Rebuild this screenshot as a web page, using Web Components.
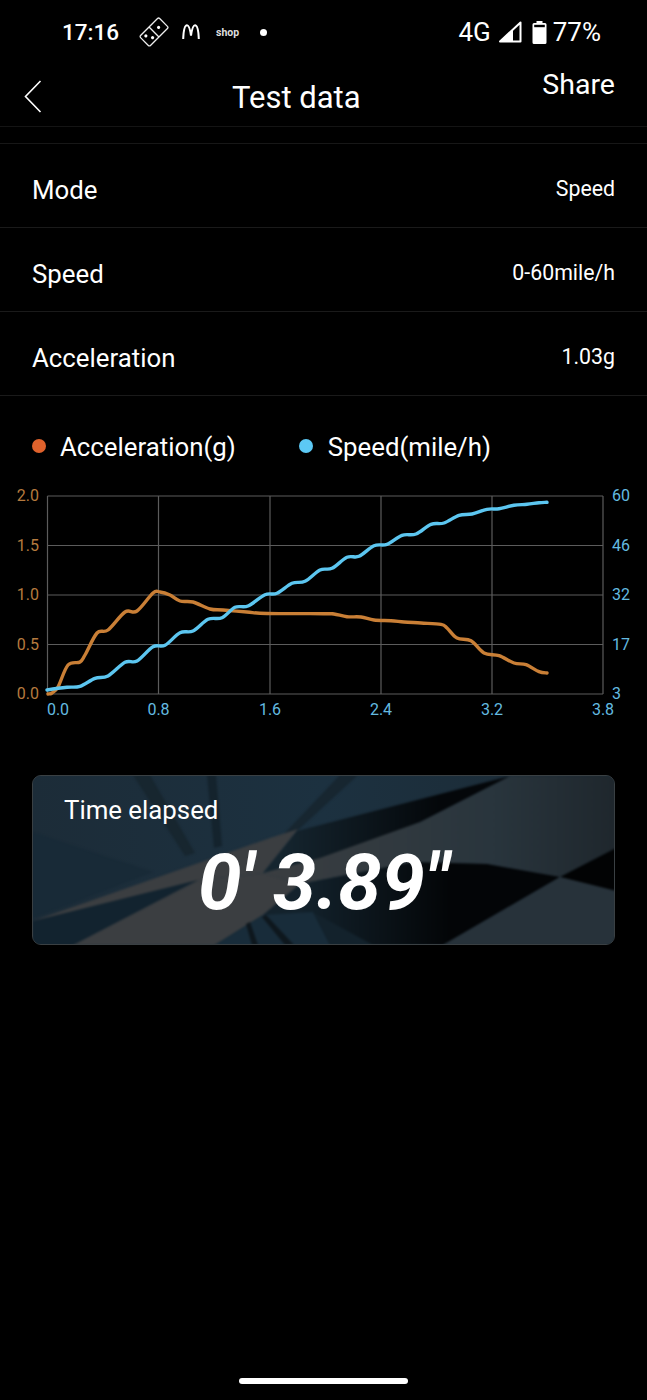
<!DOCTYPE html>
<html>
<head>
<meta charset="utf-8">
<title>Test data</title>
<style>
  html, body { margin: 0; background: #000; }
  body { font-family: Roboto, "Liberation Sans", sans-serif; color: #fff; }
  test-page { width: 647px; height: 1400px; }
</style>
</head>
<body>
<test-page>
  <status-bar></status-bar>
  <app-header title="Test data" action="Share"></app-header>
  <data-row label="Mode" value="Speed"></data-row>
  <data-row label="Speed" value="0-60mile/h"></data-row>
  <data-row label="Acceleration" value="1.03g"></data-row>
  <chart-legend></chart-legend>
  <speed-chart></speed-chart>
  <time-card label="Time elapsed" value="0' 3.89&quot;"></time-card>
  <home-bar></home-bar>
</test-page>

<script>
class TestPage extends HTMLElement {
    constructor() {
        super();
        this.attachShadow({ mode: "open" }).innerHTML = `
        <style>
          :host { display: flex; flex-direction: column; background: #000; overflow: hidden; }
        </style>
        <slot></slot>`;
    }
}

class StatusBar extends HTMLElement {
    constructor() {
        super();
        this.attachShadow({ mode: "open" }).innerHTML = `
        <style>
          :host { display: flex; align-items: center; height: 64px; padding-left: 62px; padding-right: 46px; color: #fff; }
          .time { width: 70px; font-size: 22.5px; font-weight: 500; }
          svg { display: block; flex: none; }
          .shop { font-size: 10.5px; font-weight: 700; color: #ddd; margin-left: 16px; width: 44px; }
          .dot { width: 7px; height: 7px; border-radius: 50%; background: #fff; }
          .right { margin-left: auto; display: flex; align-items: center; font-size: 26px; }
          .right span { display: block; }
        </style>
        <span class="time">17:16</span>
        <svg width="30" height="30" viewBox="0 0 30 30" style="margin-left:7px" fill="none" stroke="#eee" stroke-width="1.3">
          <g transform="rotate(-45 15 15)">
            <rect x="1.5" y="8" width="27" height="14" rx="1.5"/>
            <path d="M15 8v14"/>
            <circle cx="6.5" cy="12" r="1.6" fill="#fff" stroke="none"/>
            <circle cx="10" cy="18" r="1.6" fill="#fff" stroke="none"/>
            <circle cx="21.5" cy="15" r="1.6" fill="#fff" stroke="none"/>
          </g>
        </svg>
        <svg width="18" height="16" viewBox="0 0 18 16" style="margin-left:13px" fill="none" stroke="#fff" stroke-width="2">
          <path d="M1.2 15C1.5 6 3 1.2 5 1.2S8.2 6 9 11.5C9.8 6 11 1.2 13 1.2S16.5 6 16.8 15"/>
        </svg>
        <span class="shop">shop</span>
        <span class="dot"></span>
        <div class="right">
          <span>4G</span>
          <svg width="24" height="22" viewBox="0 0 24 22" style="margin-left:7px">
            <path d="M22.5 1.5v19H2Z" fill="none" stroke="#fff" stroke-width="2" stroke-linejoin="round"/>
            <path d="M15 8.5V21H1.5Z" fill="#fff"/>
          </svg>
          <svg width="15" height="23" viewBox="0 0 15 23" style="margin-left:10px">
            <path d="M4.5 0h6v2h2.5a1.5 1.5 0 0 1 1.5 1.5V21.5a1.5 1.5 0 0 1-1.5 1.5H2a1.5 1.5 0 0 1-1.5-1.5V3.5A1.5 1.5 0 0 1 2 2h2.5Z" fill="#fff"/>
            <rect x="2.2" y="3.8" width="10.6" height="2.4" fill="#000"/>
          </svg>
          <span style="margin-left:6px">77%</span>
        </div>`;
    }
}

class AppHeader extends HTMLElement {
    constructor() {
        super();
        this.attachShadow({ mode: "open" }).innerHTML = `
        <style>
          :host { display: block; height: 80px; box-sizing: border-box; border-bottom: 1px solid #171717; }
          .wrap { display: grid; grid-template-columns: 210px 1fr auto; height: 63px; padding-right: 32px; box-sizing: border-box; border-bottom: 1px solid #141414; }
          .back { padding: 16px 0 0 24px; }
          .back svg { display: block; }
          .title { font-size: 31px; line-height: 36px; padding-top: 16px; margin-left: 22px; }
          .action { font-size: 28.5px; line-height: 32px; padding-top: 5px; }
        </style>
        <div class="wrap">
          <div class="back">
            <svg width="18" height="33" viewBox="0 0 18 33" fill="none" stroke="#fff" stroke-width="1.6"><path d="M16.5 1 1.5 16.5 16.5 32"/></svg>
          </div>
          <div class="title">${this.getAttribute("title")}</div>
          <div class="action">${this.getAttribute("action")}</div>
        </div>`;
    }
}

class DataRow extends HTMLElement {
    constructor() {
        super();
        this.attachShadow({ mode: "open" }).innerHTML = `
        <style>
          :host { display: flex; justify-content: space-between; align-items: center; height: 84px; box-sizing: border-box; padding: 0 32px; border-bottom: 1px solid #1a1a1a; }
          .label { font-size: 25.8px; margin-top: 9px; }
          .value { font-size: 21.3px; margin-top: 5px; }
        </style>
        <span class="label">${this.getAttribute("label")}</span>
        <span class="value">${this.getAttribute("value")}</span>`;
    }
}

class ChartLegend extends HTMLElement {
    constructor() {
        super();
        this.attachShadow({ mode: "open" }).innerHTML = `
        <style>
          :host { display: flex; align-items: center; height: 84px; box-sizing: border-box; padding: 18px 0 0 32px; font-size: 25.8px; }
          i { width: 14px; height: 14px; border-radius: 50%; margin-right: 14px; flex: none; margin-top: -3px; }
          .a { background: #e0622c; }
          .b { background: #5cc9f5; margin-left: 63px; margin-right: 15px; }
        </style>
        <i class="a"></i><span>Acceleration(g)</span>
        <i class="b"></i><span>Speed(mile/h)</span>`;
    }
}

// points read off the reference, page coordinates
var ACCEL = [[48,694],[52,693],[58,687],[68,665],[80,662],[85,655],[97,633],[108,630],[125,612],[137,611],[153,593],[160,592],[170,595],[180,601],[193,602],[210,609],[223,610],[247,612],[267,613.5],[324,613.7],[334,614],[347,616.7],[361,617],[374,620],[391,620.7],[404,622],[421,623],[441,624.3],[447,628],[457,638],[471,640.7],[484,653],[499,655.7],[514,663],[526,664.7],[539,671.7],[547,673]];
var SPEED = [[47,690],[67,687.3],[80,686.3],[95,678.3],[108,676],[125,662.3],[137,661],[153,646.7],[165,645.3],[180,632.7],[193,631],[208,619.3],[222,617.7],[235,607.3],[248,606],[265,594.7],[277,593.3],[292,583.3],[305,581.3],[320,570],[332,568.3],[347,557.3],[359,556.3],[374,545.7],[387,544.3],[402,535.3],[416,534],[431,524.3],[444,523],[459,515.3],[472,514],[487,509.3],[499,508.7],[514,505.3],[527,504.3],[539,502.7],[547,502.3]];

function smoothPath(pts) {
    var d = "M" + pts[0][0] + " " + pts[0][1];
    for (var i = 0; i < pts.length - 1; i++) {
        var p0 = pts[i - 1] || pts[i], p1 = pts[i], p2 = pts[i + 1], p3 = pts[i + 2] || p2;
        var c1x = p1[0] + (p2[0] - p0[0]) / 6, c1y = p1[1] + (p2[1] - p0[1]) / 6;
        var c2x = p2[0] - (p3[0] - p1[0]) / 6, c2y = p2[1] - (p3[1] - p1[1]) / 6;
        d += "C" + c1x.toFixed(1) + " " + c1y.toFixed(1) + " " + c2x.toFixed(1) + " " + c2y.toFixed(1) + " " + p2[0] + " " + p2[1];
    }
    return d;
}

class SpeedChart extends HTMLElement {
    constructor() {
        super();
        var xs = [47.5, 158.5, 270, 381, 492, 603];
        var ys = [496, 545.5, 595, 644.5, 694];
        var left = ["2.0", "1.5", "1.0", "0.5", "0.0"];
        var right = ["60", "46", "32", "17", "3"];
        var bottom = ["0.0", "0.8", "1.6", "2.4", "3.2", "3.8"];
        var grid = "";
        xs.forEach(function (x) { grid += `<line x1="${x}" x2="${x}" y1="496" y2="694"/>`; });
        ys.forEach(function (y) { grid += `<line x1="47.5" x2="603" y1="${y}" y2="${y}"/>`; });
        var labels = "";
        left.forEach(function (t, i) { labels += `<text class="o" x="39" y="${ys[i] + 5}" text-anchor="end">${t}</text>`; });
        right.forEach(function (t, i) { labels += `<text class="s" x="612" y="${ys[i] + 5}">${t}</text>`; });
        bottom.forEach(function (t, i) { labels += `<text class="s" x="${i == 0 ? 58 : xs[i]}" y="715" text-anchor="middle">${t}</text>`; });
        this.attachShadow({ mode: "open" }).innerHTML = `
        <style>
          :host { display: block; height: 295px; }
          svg { display: block; }
          line { stroke: #5c5c5c; stroke-width: 1.2; }
          text { font-size: 16px; }
          .o { fill: #b57a3e; }
          .s { fill: #64bbe0; }
          path { fill: none; stroke-width: 3.4; stroke-linecap: round; }
        </style>
        <svg width="647" height="240" viewBox="0 480 647 240">
          ${grid}
          ${labels}
          <path d="${smoothPath(ACCEL)}" stroke="#c97f36"/>
          <path d="${smoothPath(SPEED)}" stroke="#5cc6f0"/>
        </svg>`;
    }
}

class TimeCard extends HTMLElement {
    constructor() {
        super();
        this.attachShadow({ mode: "open" }).innerHTML = `
        <style>
          :host { display: block; position: relative; width: 583px; height: 170px; margin-left: 32px; box-sizing: border-box; border: 1px solid #3a4043; border-radius: 9px; overflow: hidden; background: #1b2c39; }
          .bg { position: absolute; left: -1px; top: -1px; display: block; }
          .label { position: relative; font-size: 25.8px; line-height: 30px; padding: 19px 0 0 31px; }
          .value { position: relative; font-size: 78px; line-height: 90px; font-weight: 700; font-style: italic; text-align: center; margin-top: 13px; }
        </style>
        <svg class="bg" width="583" height="170" viewBox="32 775 583 170">
          <defs>
            <linearGradient id="base" x1="0" x2="1" y1="0" y2="0">
              <stop offset="0" stop-color="#1c2c38"/><stop offset="0.5" stop-color="#1c3140"/><stop offset="1" stop-color="#1c2a34"/>
            </linearGradient>
            <linearGradient id="band" gradientUnits="userSpaceOnUse" x1="260" x2="615" y1="0" y2="0">
              <stop offset="0" stop-color="#3b3e41"/><stop offset="0.4" stop-color="#30393f"/><stop offset="0.65" stop-color="#29353d"/><stop offset="1" stop-color="#1f272d"/>
            </linearGradient>
            <linearGradient id="dome" gradientUnits="userSpaceOnUse" x1="300" x2="450" y1="0" y2="0">
              <stop offset="0" stop-color="#13222c"/><stop offset="1" stop-color="#030507"/>
            </linearGradient>
            <linearGradient id="wedge" gradientUnits="userSpaceOnUse" x1="280" x2="440" y1="0" y2="0">
              <stop offset="0" stop-color="#15252f"/><stop offset="1" stop-color="#04070a"/>
            </linearGradient>
            <filter id="soft" color-interpolation-filters="sRGB"><feGaussianBlur stdDeviation="0.8"/></filter>
          </defs>
          <rect x="32" y="775" width="583" height="170" fill="url(#base)"/>
          <g filter="url(#soft)">
            <polygon points="32,832 153,872 60,908 32,918" fill="#182a37"/>
            <polygon points="133,775 150,775 195,853 185,856" fill="#17262f"/>
            <polygon points="207,775 216,775 222,846 214,848" fill="#14232d"/>
            <polygon points="340,775 358,775 296,832 282,836" fill="#172630"/>
            <polygon points="33,921 270,838 298,829 263,873 200,880 73,945 33,945" fill="#3b3e41"/>
            <polygon points="510,776 616,776 616,848 560,877 487,864 413,862 300,884 263,873 420,822" fill="url(#band)"/>
            <polygon points="200,880 263,873 300,884 263,915 215,945 73,945" fill="#3b3e41"/>
            <polygon points="33,921 198,880 73,945 33,945" fill="#12232f"/>
            <polygon points="510,776 297,831 263,873 320,858 420,822" fill="url(#wedge)"/>
            <polygon points="300,884 413,862 487,864 560,877 443,945 215,945 263,915" fill="url(#dome)"/>
            <polygon points="313,912 330,945 215,945 263,915" fill="#182c3a"/>
            <polygon points="313,912 373,945 330,945" fill="#13222c"/>
            <polygon points="560,877 616,848 616,891" fill="#020304"/>
            <polygon points="443,945 560,877 616,891 616,945" fill="#27323a"/>
            <polygon points="250,922 258,945 252,945 246,924" fill="#0e171d"/>
            <polygon points="266,915 294,945 285,945 262,917" fill="#0e171d"/>
          </g>
        </svg>
        <div class="label">${this.getAttribute("label")}</div>
        <div class="value">${this.getAttribute("value").replace(/"/g, "&quot;")}</div>`;
    }
}

class HomeBar extends HTMLElement {
    constructor() {
        super();
        this.attachShadow({ mode: "open" }).innerHTML = `
        <style>
          :host { display: block; width: 169px; height: 6px; margin: auto auto 16px; background: #fff; border-radius: 3px; }
        </style>`;
    }
}

customElements.define("test-page", TestPage);
customElements.define("status-bar", StatusBar);
customElements.define("app-header", AppHeader);
customElements.define("data-row", DataRow);
customElements.define("chart-legend", ChartLegend);
customElements.define("speed-chart", SpeedChart);
customElements.define("time-card", TimeCard);
customElements.define("home-bar", HomeBar);
</script>
</body>
</html>
